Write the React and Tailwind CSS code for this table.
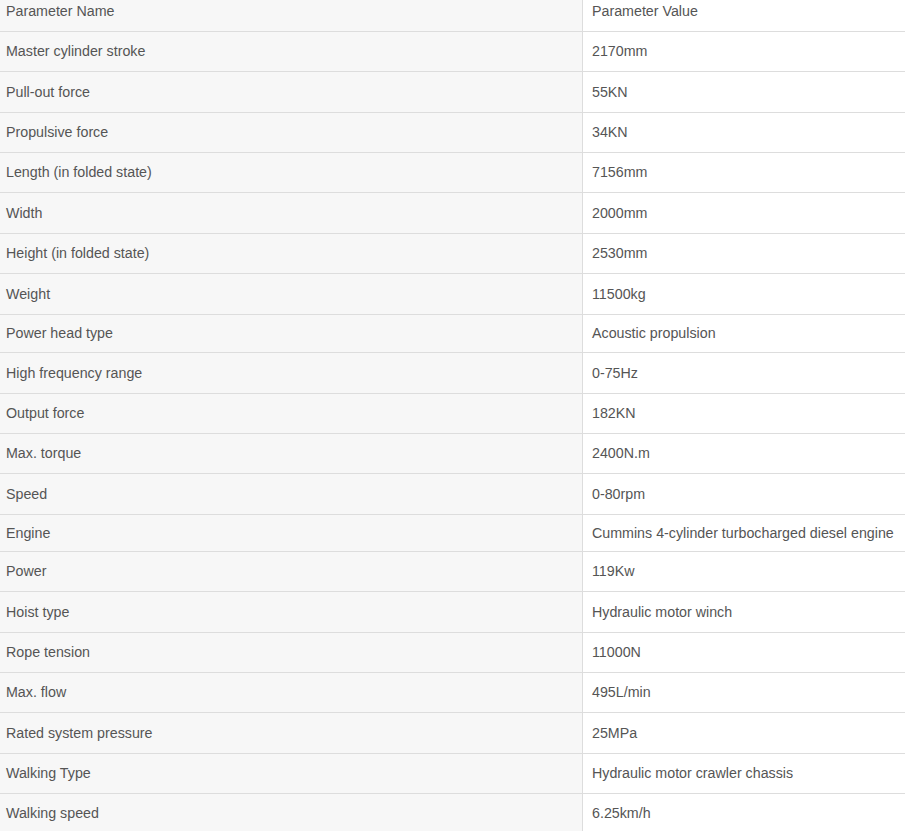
import React from "react";

const rows = [
  ["Parameter Name", "Parameter Value", 32],
  ["Master cylinder stroke", "2170mm", 40],
  ["Pull-out force", "55KN", 41],
  ["Propulsive force", "34KN", 40],
  ["Length (in folded state)", "7156mm", 40],
  ["Width", "2000mm", 41],
  ["Height (in folded state)", "2530mm", 40],
  ["Weight", "11500kg", 41],
  ["Power head type", "Acoustic propulsion", 38],
  ["High frequency range", "0-75Hz", 41],
  ["Output force", "182KN", 40],
  ["Max. torque", "2400N.m", 40],
  ["Speed", "0-80rpm", 41],
  ["Engine", "Cummins 4-cylinder turbocharged diesel engine", 37],
  ["Power", "119Kw", 40],
  ["Hoist type", "Hydraulic motor winch", 41],
  ["Rope tension", "11000N", 40],
  ["Max. flow", "495L/min", 40],
  ["Rated system pressure", "25MPa", 41],
  ["Walking Type", "Hydraulic motor crawler chassis", 40],
  ["Walking speed", "6.25km/h", 40],
];

export default function App() {
  return (
    <div className="w-[905px] bg-white text-[14.25px] text-[#555] overflow-hidden" style={{ fontFamily: '"Liberation Sans", Arial, sans-serif' }}>
      {rows.map(([k, v, h], i) => (
        <div key={i} className="flex border-b border-[#dddddd]" style={{ height: h }}>
          <div className={`w-[583px] shrink-0 bg-[#f7f7f7] border-r border-[#dddddd] flex items-center pl-[6px] ${i === 0 ? "pb-[7px]" : "pt-px"}`}>
            {k}
          </div>
          <div className={`flex-1 flex items-center pl-[9px] ${i === 0 ? "pb-[7px]" : "pt-px"}`}>{v}</div>
        </div>
      ))}
    </div>
  );
}
